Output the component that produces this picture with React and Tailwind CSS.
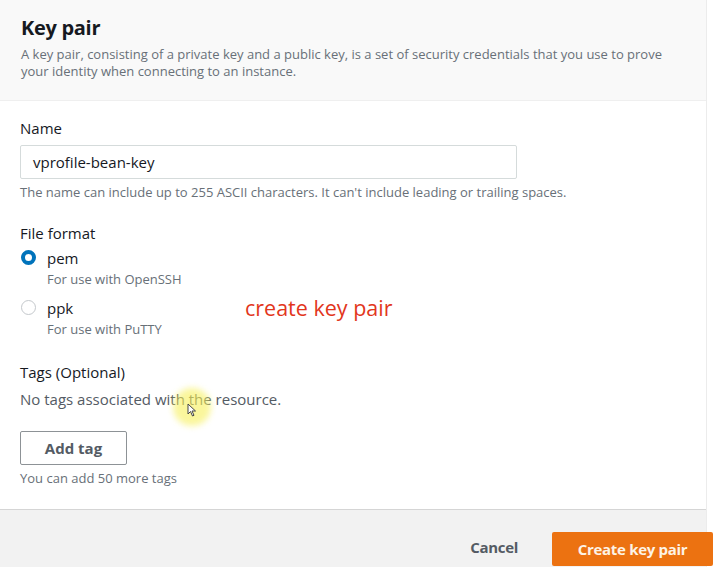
import React from "react";

const Radio = ({ checked }) =>
    checked ? (
        <span className="mt-[2px] w-[15px] h-[15px] rounded-full border-[4px] border-[#0073bb] bg-white shrink-0" />
    ) : (
        <span className="mt-[2px] w-[15px] h-[15px] rounded-full border border-[#c4c8cc] bg-white shrink-0" />
    );

const FormatOption = ({ checked, name, hint }) => (
    <div className="flex items-start gap-[11px] pl-[21px]">
        <Radio checked={checked} />
        <div className="leading-none">
            <div className="text-[15px] text-[#16191f] leading-[20px]">{name}</div>
            <div className="mt-[3px] text-[13px] text-[#687078] leading-[16px]">{hint}</div>
        </div>
    </div>
);

export default function App() {
    return (
        <div className="relative w-[713px] h-[567px] overflow-hidden bg-white font-['Open_Sans',sans-serif]">
            <div className="w-[707px] h-full flex flex-col border-r border-[#ececec]">
                <div className="h-[101px] bg-[#f9f9f9] px-[21px] pt-[14px] border-b border-[#efefef]">
                    <h2 className="text-[20px] font-bold text-[#16191f] leading-[28px] tracking-[-0.3px]">Key pair</h2>
                    <p className="mt-[4px] text-[13px] leading-[17px] text-[#687078] pr-[20px]">
                        A key pair, consisting of a private key and a public key, is a set of security credentials that you use to prove
                        your identity when connecting to an instance.
                    </p>
                </div>

                <div className="flex-1 bg-white px-[20px] pt-[17px]">
                    <label className="block text-[15px] text-[#16191f] leading-[20px]">Name</label>
                    <div className="mt-[7px] w-[497px] h-[34px] border border-[#d5dbdb] rounded-[2px] flex items-center px-[12px] text-[15px] text-[#16191f]">
                        vprofile-bean-key
                    </div>
                    <p className="mt-[5px] text-[13px] text-[#687078] leading-[16px]">
                        The name can include up to 255 ASCII characters. It can't include leading or trailing spaces.
                    </p>

                    <label className="block mt-[23px] text-[15px] text-[#16191f] leading-[20px]">File format</label>
                    <div className="-mx-[20px] mt-[5px] flex flex-col gap-[11px]">
                        <FormatOption checked name="pem" hint="For use with OpenSSH" />
                        <FormatOption name="ppk" hint="For use with PuTTY" />
                    </div>

                    <label className="block mt-[25px] text-[15px] text-[#16191f] leading-[20px]">Tags (Optional)</label>
                    <p className="mt-[7px] text-[15px] text-[#545b64] leading-[20px]">No tags associated with the resource.</p>
                    <button className="mt-[22px] w-[107px] h-[34px] border border-[#8d9296] rounded-[2px] bg-white text-[15px] font-bold text-[#545b64]">
                        Add tag
                    </button>
                    <p className="mt-[5px] text-[13px] text-[#687078] leading-[16px]">You can add 50 more tags</p>
                </div>

                <div className="h-[58px] bg-[#f2f2f2] border-t border-[#d5d5d5] flex items-start justify-end pt-[22px] gap-[34px]">
                    <button className="mt-[4px] text-[15px] font-bold text-[#545b64] tracking-[-0.3px]">Cancel</button>
                    <button className="h-[34px] w-[161px] -mr-[7px] bg-[#ec7211] rounded-[2px] text-[15px] font-bold text-[#fdf3e6] tracking-[-0.3px]">
                        Create key pair
                    </button>
                </div>
            </div>

            <span className="absolute left-[245px] top-[294px] text-[21.5px] text-[#e2361c] leading-[28px]">
                create key pair
            </span>
            <span className="absolute left-[173px] top-[388px] w-[38px] h-[38px] rounded-full bg-[#f6f05a]/60 blur-[3px]" />
            <svg className="absolute left-[187px] top-[403px]" width="10" height="14" viewBox="0 0 10 14">
                <path d="M1 1 L1 11 L3.5 8.5 L5.5 13 L7 12.3 L5 8 L8.5 8 Z" fill="white" stroke="#444" strokeWidth="1" />
            </svg>
        </div>
    );
}
